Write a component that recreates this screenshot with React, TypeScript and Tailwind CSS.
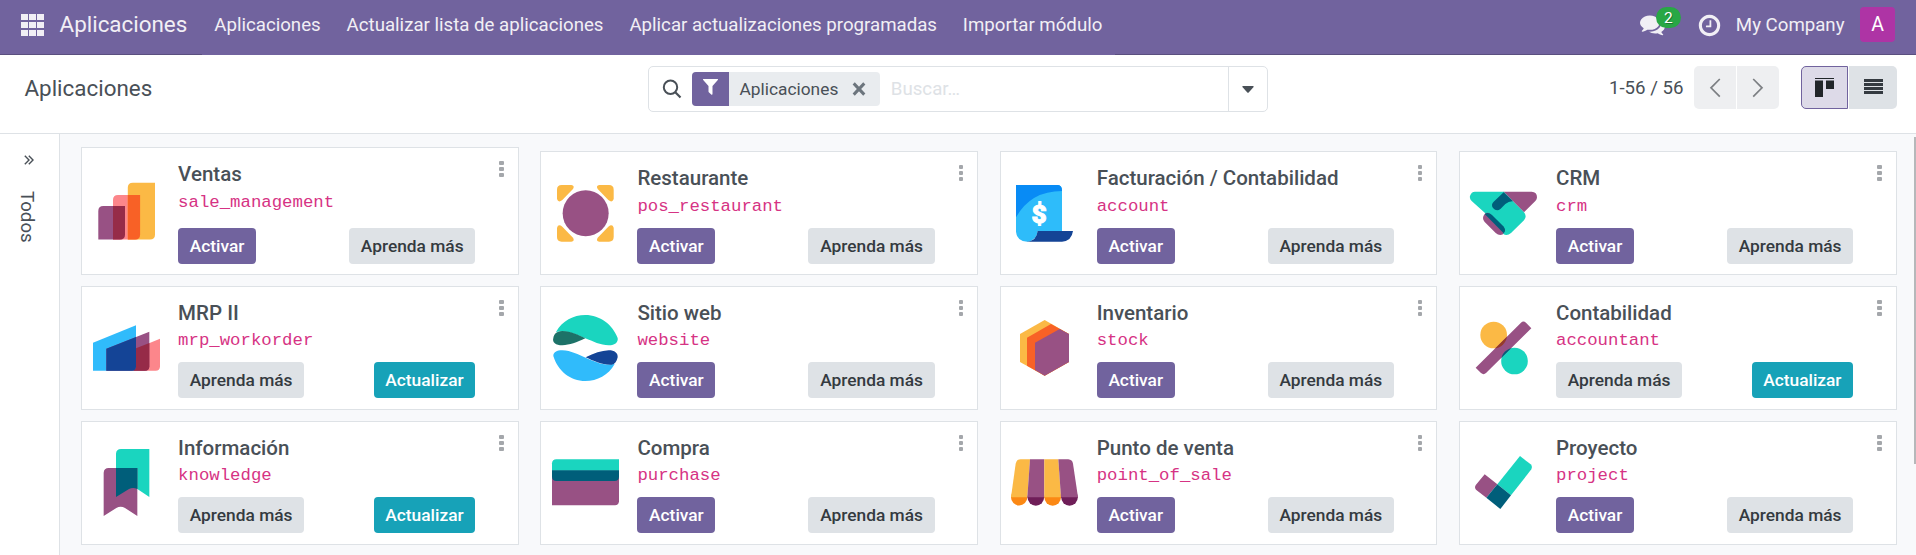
import type { ReactNode } from "react";

type App = {
  name: string;
  module: string;
  icon: ReactNode;
  installed?: boolean;
};

function Icon({ box, children }: { box: string; children: ReactNode }) {
  return (
    <svg viewBox={box} className="h-[68px] w-[67px] shrink-0 overflow-visible" aria-hidden="true">
      {children}
    </svg>
  );
}

const SalesIcon = (
  <Icon box="0 0 67 68">
    <path d="M5.3 34q0-5 5-5H32V57.500q0 5-5 5H5.300z" fill="#985184" />
    <path d="M20 23q0-5 5-5H47.100V57.500q0 5-5 5H20z" fill="#fc868b" />
    <path d="M34.800 10.700q0-5 5-5H62V57.500q0 5-5 5H34.800z" fill="#fbb945" />
    <path d="M20 29H32V57.500q0 5-5 5H20z" fill="#962b48" />
    <path d="M34.800 18H47.100V57.500q0 5-5 5H34.800z" fill="#f86126" />
  </Icon>
);

const RestaurantIcon = (
  <Icon box="66 117 201 204">
    <g fill="#fbb945">
      <path d="M81 177V149q0-14 14-14h29q11 2 5 12L97 180q-12 10-16-3z" />
      <path d="M251 177V149q0-14-14-14h-29q-11 2-5 12l32 33q12 10 16-3z" />
      <path d="M81 263v28q0 14 14 14h29q11-2 5-12L97 260q-12-10-16 3z" />
      <path d="M251 263v28q0 14-14 14h-29q-11-2-5-12l32-33q12-10 16 3z" />
    </g>
    <circle cx="167" cy="220" r="73" fill="#fff" />
    <circle cx="167" cy="220" r="69" fill="#985184" />
  </Icon>
);

const InvoicingIcon = (
  <Icon box="63 117 201 204">
    <path d="M78 135H204q12 2 12 15V274H143q-3 28-31 31-31-1-34-30z" fill="#2ebcfa" />
    <path d="M78 135H204q12 2 12 18-94 0-138 79z" fill="#088bf5" />
    <path d="M143 273H249q-4 30-33 32H110q30-2 33-32z" fill="#144496" />
    <text
      x="147.500"
      y="248"
      textAnchor="middle"
      fill="#fff"
      stroke="#fff"
      strokeWidth="3"
      className="font-['Roboto'] text-[79px] font-black"
    >
      $
    </text>
  </Icon>
);

const CrmIcon = (
  <Icon box="90 147 201 204">
    <path d="M190 185h85q16 1 16 17 0 6-5 11l-34 34z" fill="#985184" />
    <path
      d="M105 185h86l28 29 33 33q10 12 0 24l-39 38q-12 10-23 3l-55-63-40-36q-7-7-5-15 4-13 15-13z"
      fill="#1ad5bf"
    />
    <path d="M134 252q-10 12 0 24l33 33q11 10 22 4l6-14-48-50q-7-3-13 3z" fill="#985184" />
    <path d="M134 252q11-7 22 3l34 34q10 12 1 21z" fill="#005e7a" />
    <path d="M191 187l-30 28q-9 9-2 19 11 12 23 2l14-14q11-9 23-8z" fill="#005e7a" />
  </Icon>
);

const MrpIcon = (
  <Icon box="69 117 201 204">
    <path d="M197 221l73-30v84q-1 12-13 12h-67z" fill="#fc868b" />
    <path d="M69 203l129-52v124q-1 12-12 12H69z" fill="#30bbfb" />
    <path d="M109 221l129-51v105q-1 12-13 12H109z" fill="#985184" />
    <path d="M198 220l40-16v71q-1 12-13 12h-35q8-3 8-12z" fill="#962b48" />
    <path d="M109 221l89-35v89q-1 12-12 12h-77z" fill="#144496" />
  </Icon>
);

const WebsiteIcon = (
  <Icon box="66 117 201 204">
    <path
      d="M78 171C97 137 130 120 166 120c44 0 82 29 97 69 2 12-7 22-27 22-25 0-47-12-70-21-34-14-50-24-88-19z"
      fill="#1ad5bf"
    />
    <path d="M70 189c2-12 10-20 27-21 26 0 48 12 69 22-26 12-47 20-69 21-20 0-31-9-27-22z" fill="#1d7268" />
    <path
      d="M70 243c0-11 10-17 27-17 26 1 48 13 70 22 34 14 50 24 87 19-19 34-52 51-88 51-45 0-82-30-96-75z"
      fill="#30bbfb"
    />
    <path d="M167 247c25-12 47-20 69-21 18 0 28 8 27 21-3 13-9 21-18 22-30 1-54-11-78-22z" fill="#144496" />
  </Icon>
);

const StockIcon = (
  <Icon box="63 117 201 204">
    <path d="M164 135l73 42v84l-73 41-74-41v-84z" fill="#fbb945" />
    <path d="M183 147l54 30v84l-73 41-53-30v-84z" fill="#f86126" />
    <path d="M209 162l28 15v84l-73 41-29-17v-82z" fill="#985184" />
  </Icon>
);

const AccountingIcon = (
  <Icon box="90 117 201 204">
    <defs>
      <clipPath id="percent-bar">
        <path d="M107 278L243 143q7-7 15 0l16 17-136 134q-7 7-15 0z" />
      </clipPath>
    </defs>
    <circle cx="161" cy="180" r="40" fill="#fbb945" />
    <circle cx="223.500" cy="258" r="40" fill="#1ad5bf" />
    <path d="M107 278L243 143q7-7 15 0l16 17-136 134q-7 7-15 0z" fill="#985184" />
    <g clipPath="url(#percent-bar)">
      <circle cx="161" cy="180" r="40" fill="#953a2a" />
      <circle cx="223.500" cy="258" r="40" fill="#005e7a" />
    </g>
  </Icon>
);

const KnowledgeIcon = (
  <Icon box="69 522 201 204">
    <path d="M138 536q1-14 15-14h85v144l-37-25q-13-7-24 0l-39 25z" fill="#1ad5bf" />
    <path d="M101 593q1-14 15-14h86v144l-37-24q-13-7-26 0l-38 24z" fill="#985184" />
    <path d="M138 579h64v63q-13-6-25 0l-39 24z" fill="#005e7a" />
  </Icon>
);

const PurchaseIcon = (
  <Icon box="66 522 201 204">
    <path d="M66 600h201v79q-1 12-12 12H66z" fill="#985184" />
    <path d="M66 565q1-12 13-12h188v34H66z" fill="#1ad5bf" />
    <path d="M66 586h201v19q-1 13-13 13H79q-12 0-13-13z" fill="#005e7a" />
  </Icon>
);

const PosIcon = (
  <Icon box="63 522 201 204">
    <circle cx="87.500" cy="667" r="24.500" fill="#fb8814" />
    <circle cx="137.500" cy="667" r="25" fill="#6f1e58" />
    <circle cx="188" cy="667" r="25" fill="#fb8814" />
    <circle cx="238.500" cy="667" r="25" fill="#6f1e58" />
    <path d="M92 553h28l-8 114H63l14-101q2-13 15-13z" fill="#fbb945" />
    <path d="M120 553h43v114h-51z" fill="#985184" />
    <path d="M163 553h42l8 114h-50z" fill="#fbb945" />
    <path d="M205 553h30q12 1 14 13l15 101h-51z" fill="#985184" />
  </Icon>
);

const ProjectIcon = (
  <Icon box="90 522 201 204">
    <path d="M240 543l32 25q6 6 2 15l-61 78-41-33z" fill="#1ad5bf" />
    <path d="M134 598l38 30-33 40-31-24q-6-8 0-15z" fill="#985184" />
    <path d="M172 628l41 33-32 41-42-34z" fill="#005e7a" />
  </Icon>
);

const apps: App[] = [
  { name: "Ventas", module: "sale_management", icon: SalesIcon },
  { name: "Restaurante", module: "pos_restaurant", icon: RestaurantIcon },
  { name: "Facturación / Contabilidad", module: "account", icon: InvoicingIcon },
  { name: "CRM", module: "crm", icon: CrmIcon },
  { name: "MRP II", module: "mrp_workorder", icon: MrpIcon, installed: true },
  { name: "Sitio web", module: "website", icon: WebsiteIcon },
  { name: "Inventario", module: "stock", icon: StockIcon },
  { name: "Contabilidad", module: "accountant", icon: AccountingIcon, installed: true },
  { name: "Información", module: "knowledge", icon: KnowledgeIcon, installed: true },
  { name: "Compra", module: "purchase", icon: PurchaseIcon },
  { name: "Punto de venta", module: "point_of_sale", icon: PosIcon },
  { name: "Proyecto", module: "project", icon: ProjectIcon },
];

const buttonBase = "h-9 rounded px-[11.700px] text-[17.330px] font-medium leading-9 whitespace-nowrap";

function Button({ kind }: { kind: "activate" | "learn" | "upgrade" }) {
  if (kind === "activate") return <button className={`${buttonBase} bg-[#71639e] text-white`}>Activar</button>;
  if (kind === "upgrade") return <button className={`${buttonBase} bg-[#17a2b8] text-white`}>Actualizar</button>;
  return <button className={`${buttonBase} bg-[#dee2e6] text-[#343a40]`}>Aprenda más</button>;
}

function Card({ app, index }: { app: App; index: number }) {
  const height = index === 0 ? "h-32" : "h-[124px]";
  const codeGap = index < 4 ? "mt-1" : "mt-[3px]";
  const buttonGap = index === 0 ? "mt-3.5" : "mt-2.5";
  return (
    <article className={`flex border border-[#dee2e6] bg-white pl-[10.600px] ${height}`}>
      <div className="flex items-center">{app.icon}</div>
      <div className="ml-[18.500px] flex-1 pt-3">
        <h2 className="h-7 text-[20.530px] leading-7 font-medium text-[#495057]">{app.name}</h2>
        <code className={`block h-[22px] font-['Liberation_Mono',monospace] text-[17.330px] leading-[22px] text-[#d63384] ${codeGap}`}>
          {app.module}
        </code>
        <div className={`flex justify-between ${buttonGap}`}>
          <Button kind={app.installed ? "learn" : "activate"} />
          <Button kind={app.installed ? "upgrade" : "learn"} />
        </div>
      </div>
      <button className="ml-6 mr-[14px] mt-[13px] flex h-4 w-[4.500px] flex-col justify-between" aria-label="Opciones">
        <span className="h-1 w-full rounded-[1px] bg-[#a4a7ab]" />
        <span className="h-1 w-full rounded-[1px] bg-[#a4a7ab]" />
        <span className="h-1 w-full rounded-[1px] bg-[#a4a7ab]" />
      </button>
    </article>
  );
}

function Navbar() {
  return (
    <header className="flex h-[55px] bg-[#71639e] text-[18.667px] text-[#f1eff5]">
      <div className="flex w-[202px] items-start border-b border-[#5a4f7f] pl-[21px]">
        <div className="mt-[13.500px] grid grid-cols-3 gap-x-[1.500px] gap-y-[2px]">
          {Array.from({ length: 9 }, (_, i) => (
            <span key={i} className="h-[6.300px] w-[6.700px] bg-[#f1eff5]" />
          ))}
        </div>
        <span className="ml-[15.500px] text-[22.400px] leading-[49px]">Aplicaciones</span>
      </div>
      <nav className="flex w-[913px] gap-[25.900px] pl-[12.300px] leading-[51px] whitespace-nowrap">
        <span>Aplicaciones</span>
        <span>Actualizar lista de aplicaciones</span>
        <span>Aplicar actualizaciones programadas</span>
        <span>Importar módulo</span>
      </nav>
      <div className="flex flex-1 items-start justify-end border-b border-[#5a4f7f] pr-[21px]">
        <div className="relative mt-3 mr-[32px]">
          <svg viewBox="0 0 1792 1792" className="h-[25px] w-[25px]" fill="currentColor">
            <path d="M1408 768q0 139-94 257t-256.500 186.500-353.500 68.500q-86 0-176-16-124 88-278 128-36 9-86 16h-3q-11 0-20.500-8t-11.500-21q-1-3-1-6.500t.5-6.500 2-6l2.500-5 3.500-5.500 4-5 4.500-5 4-4.500q5-6 23-25t26-29.500 22.500-29 25-38.500 20.500-44q-124-72-195-177t-71-224q0-139 94-257t256.500-186.500 353.500-68.500 353.500 68.500 256.500 186.500 94 257zm384 256q0 120-71 224.500t-195 176.500q10 24 20.500 44t25 38.500 22.500 29 26 29.500 23 25q1 1 4 4.500t4.500 5 4 5 3.500 5.500l2.500 5 2 6 .5 6.500-1 6.500q-3 14-13 22t-22 7q-50-7-86-16-154-40-278-128-90 16-176 16-271 0-472-132 58 4 88 4 161 0 309-45t264-129q125-92 192-212t67-254q0-77-23-152 129 71 204 178t75 230z" />
          </svg>
          <span className="absolute -top-[5px] left-[16px] h-[21px] w-[25px] rounded-full bg-[#28a745] text-center text-[15.500px] leading-[22px] text-white [text-shadow:1px_1px_0_rgba(0,0,0,0.3)]">
            2
          </span>
        </div>
        <svg viewBox="0 0 1792 1792" className="mt-[13px] mr-[14px] h-[25px] w-[25px]" fill="currentColor">
          <path d="M1024 544v448q0 14-9 23t-23 9h-320q-14 0-23-9t-9-23v-64q0-14 9-23t23-9h224v-352q0-14 9-23t23-9h64q14 0 23 9t9 23zm416 352q0-148-73-273t-198-198-273-73-273 73-198 198-73 273 73 273 198 198 273 73 273-73 198-198 73-273zm224 0q0 209-103 385.500t-279.500 279.500-385.500 103-385.500-103-279.500-279.500-103-385.500 103-385.500 279.500-279.500 385.500-103 385.500 103 279.500 279.500 103 385.500z" />
        </svg>
        <span className="mr-[15.500px] leading-[51px]">My Company</span>
        <span className="mt-[7px] h-[35px] w-[35px] rounded bg-[#ae34a5] text-center text-[19.500px] leading-[35px] text-white">A</span>
      </div>
    </header>
  );
}

function SearchBox() {
  return (
    <div className="flex h-[46px] w-[620px] items-center rounded-[5px] border border-[#dee2e6]">
      <svg viewBox="0 0 20 20" className="ml-[13px] h-5 w-5 shrink-0" fill="none" stroke="#495057">
        <circle cx="8.500" cy="8.200" r="6.700" strokeWidth="2" />
        <path d="M13.300 13.300l5.200 5.200" strokeWidth="2.200" />
      </svg>
      <div className="ml-[10px] flex h-[34px] items-center overflow-hidden rounded bg-[#e9ecef]">
        <span className="flex h-full w-[37px] items-center justify-center bg-[#71639e]">
          <svg viewBox="0 0 15 16" className="-mt-1 h-4 w-[15px]" fill="#fff">
            <path d="M.3 0h14.400q.6.600.1 1.100L9.500 7v8.300q-.3.700-1 .4L5.800 13.200q-.3-.3-.3-.7V7L.2 1.100Q-.3.600.3 0z" />
          </svg>
        </span>
        <span className="ml-[10.500px] pt-px text-[17.330px] text-[#495057]">Aplicaciones</span>
        <svg viewBox="0 0 14 14" className="ml-[14px] mr-[13.500px] h-[14px] w-[14px]" stroke="#6c757d" strokeWidth="3">
          <path d="M1.700 1.400l10.600 11.200M12.300 1.400L1.700 12.600" />
        </svg>
      </div>
      <span className="ml-[11px] flex-1 text-[18.667px] text-[#dee2e6]">Buscar…</span>
      <div className="flex h-full w-[39px] items-center justify-center border-l border-[#dee2e6]">
        <svg viewBox="0 0 12 7" className="h-[7px] w-3" fill="#495057">
          <path d="M1 0h10q1 .2.600 1L6.700 6.400q-.7.600-1.400 0L.4 1Q0 .2 1 0z" />
        </svg>
      </div>
    </div>
  );
}

function ControlPanel() {
  return (
    <section className="flex h-[79px] border-b border-[#dee2e6] bg-white pt-[11px] text-[#495057]">
      <h1 className="w-[648px] pl-[24.500px] text-[22.400px] leading-[44px]">Aplicaciones</h1>
      <SearchBox />
      <div className="flex flex-1 justify-end pr-[19px]">
        <span className="mr-[10.500px] text-[18.667px] leading-[45px]">1-56 / 56</span>
        <div className="mr-[22px] flex h-[43px] gap-px">
          <button className="flex w-[42px] items-center justify-center rounded-l-[5px] bg-[#eeeff1]" aria-label="Anterior">
            <svg viewBox="0 0 12 20" className="h-5 w-3" fill="none" stroke="#7c7f83" strokeWidth="1.700">
              <path d="M10.800 1L2 9.800l8.800 8.800" />
            </svg>
          </button>
          <button className="flex w-[42px] items-center justify-center rounded-r-[5px] bg-[#eeeff1]" aria-label="Siguiente">
            <svg viewBox="0 0 12 20" className="h-5 w-3" fill="none" stroke="#7c7f83" strokeWidth="1.700">
              <path d="M1.200 1L10 9.800l-8.800 8.800" />
            </svg>
          </button>
        </div>
        <div className="flex h-[43px] gap-px">
          <button className="flex w-[47px] items-center justify-center rounded-l-[5px] border border-[#71639e] bg-[#dddae8]" aria-label="Kanban">
            <svg viewBox="0 0 19 19" className="h-[19px] w-[19px]" fill="#212529">
              <path d="M0 0h19v1H0zM0 2.500h8V19H0zM11 2.500h8V11h-8z" />
            </svg>
          </button>
          <button className="flex w-[48px] items-center justify-center rounded-r-[5px] bg-[#dee2e6]" aria-label="Lista">
            <svg viewBox="0 0 19 15" className="-mt-0.5 h-[15px] w-[19px]" fill="#343a40">
              <path d="M0 0h19v3H0zM0 4h19v3H0zM0 8h19v3H0zM0 12h19v3H0z" />
            </svg>
          </button>
        </div>
      </div>
    </section>
  );
}

export default function App() {
  return (
    <div className="flex h-[555px] flex-col overflow-hidden bg-white font-['Roboto',sans-serif]">
      <Navbar />
      <ControlPanel />
      <div className="flex min-h-0 flex-1">
        <aside className="flex w-[60px] flex-col items-center border-r border-[#dee2e6] pr-[2px] text-[#495057]">
          <svg viewBox="0 0 10 10" className="mt-[21px] h-[10px] w-[10px]" fill="none" stroke="#495057" strokeWidth="1.400">
            <path d="M.8.800L5 5 .8 9.200M4.800.800L9 5 4.800 9.200" />
          </svg>
          <span className="mt-[26px] mr-[3px] text-[18.667px] leading-7 [writing-mode:vertical-rl]">Todos</span>
        </aside>
        <main className="flex-1 bg-[#f8f9fb] pl-[21px] pt-[13px]">
          <div className="grid grid-cols-[repeat(4,437.800px)] items-end gap-x-[21.500px] gap-y-[11px]">
            {apps.map((app, i) => (
              <Card key={app.module} app={app} index={i} />
            ))}
          </div>
        </main>
        <div className="w-[2.500px] bg-[#f8f9fb]">
          <div className="mt-[3px] h-[327px] bg-[#b6b8ba]" />
        </div>
      </div>
    </div>
  );
}
